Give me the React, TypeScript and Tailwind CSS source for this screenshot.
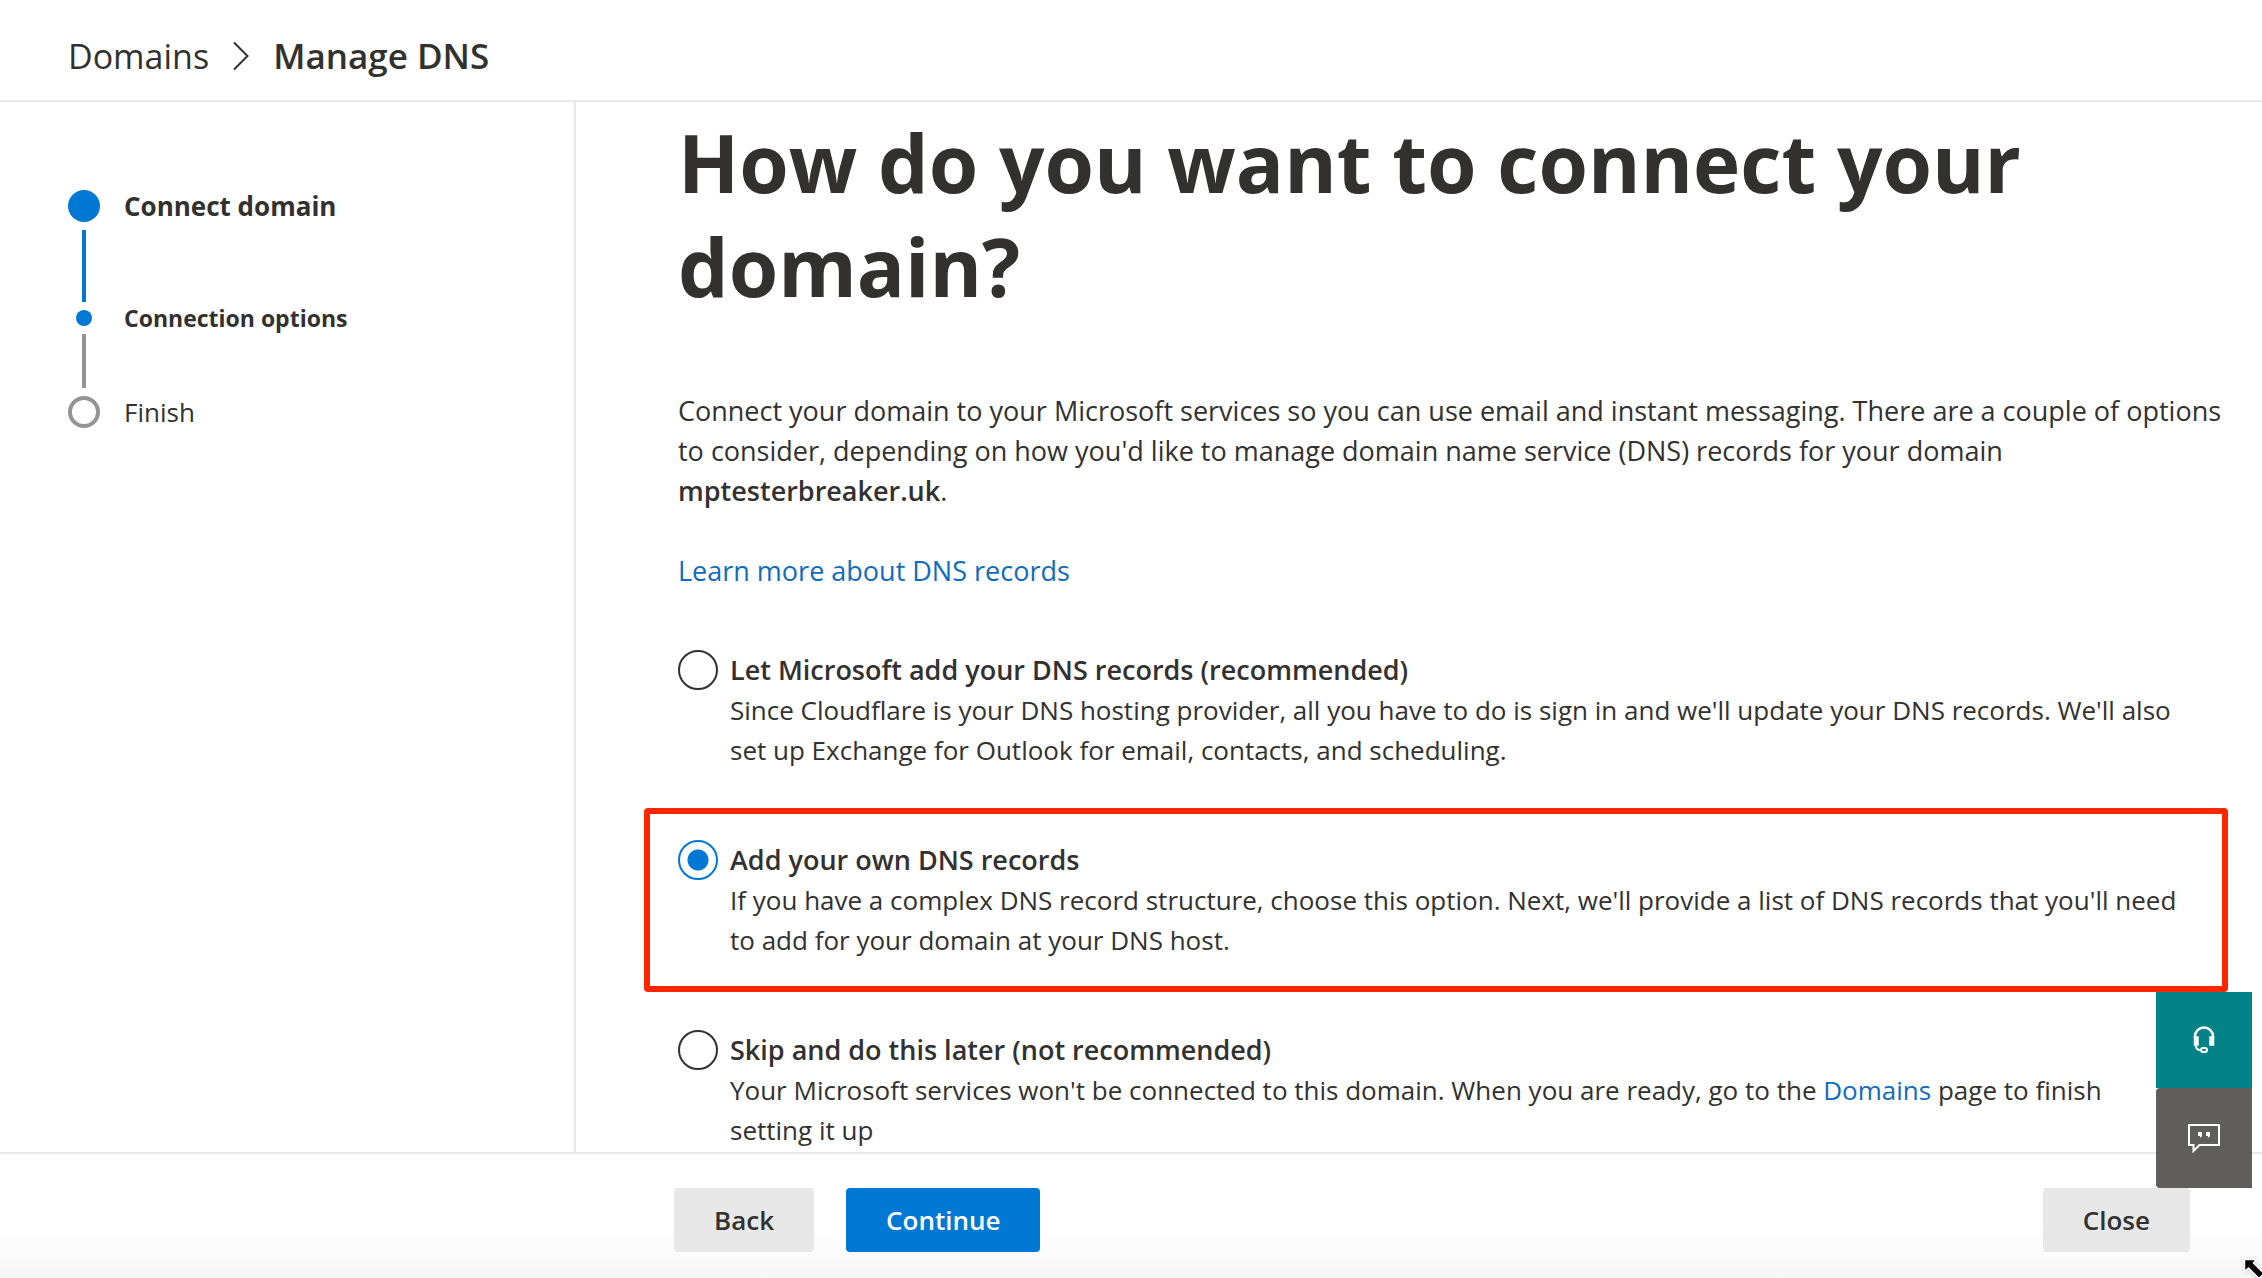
import { useState, type ReactNode } from "react";

type Option = { id: string; title: string; body: ReactNode; highlighted?: boolean };

const options: Option[] = [
  {
    id: "microsoft",
    title: "Let Microsoft add your DNS records (recommended)",
    body: "Since Cloudflare is your DNS hosting provider, all you have to do is sign in and we'll update your DNS records. We'll also set up Exchange for Outlook for email, contacts, and scheduling.",
  },
  {
    id: "own",
    title: "Add your own DNS records",
    body: "If you have a complex DNS record structure, choose this option. Next, we'll provide a list of DNS records that you'll need to add for your domain at your DNS host.",
    highlighted: true,
  },
  {
    id: "skip",
    title: "Skip and do this later (not recommended)",
    body: (
      <>
        Your Microsoft services won't be connected to this domain. When you are ready, go to the{" "}
        <a href="#domains" className="text-[#0f6cbd]">
          Domains
        </a>{" "}
        page to finish setting it up
      </>
    ),
  },
];

function Steps() {
  return (
    <ol className="flex flex-col gap-2">
      <li className="flex h-8 items-center gap-6">
        <span className="size-8 rounded-full bg-[#0078d4]" />
        <span className="text-[26px] font-bold">Connect domain</span>
      </li>
      <li aria-hidden className="ml-[14px] h-[72px] w-1 bg-[#0078d4]" />
      <li className="flex h-4 items-center gap-6">
        <span className="flex w-8 justify-center">
          <span className="size-4 rounded-full bg-[#0078d4]" />
        </span>
        <span className="text-[23px] font-bold">Connection options</span>
      </li>
      <li aria-hidden className="ml-[14px] h-[54px] w-1 bg-[#949494]" />
      <li className="flex h-8 items-center gap-6">
        <span className="size-8 rounded-full border-4 border-[#949494]" />
        <span className="text-[26px]">Finish</span>
      </li>
    </ol>
  );
}

function HelpButtons() {
  return (
    <div className="absolute right-[10px] bottom-[90px] flex w-24 flex-col">
      <button aria-label="Help" className="flex h-24 items-center justify-center bg-[#038387]">
        <svg viewBox="0 0 24 30" className="h-[30px] w-6" fill="none" stroke="#fff" strokeWidth="2.500">
          <path d="M3 13v-1.500a9 9 0 0 1 18 0V13" />
          <path d="M3 12.500h2.500v7H3zM18.500 12.500H21v7h-2.500z" />
          <path d="M4 19.500v1.500c0 2.500 1.500 4 4.500 4" strokeWidth="2" />
          <rect x="9" y="23" width="6" height="4" rx="2" strokeWidth="2" />
        </svg>
      </button>
      <button aria-label="Feedback" className="flex h-[100px] items-center justify-center rounded-l-sm bg-[#605e5c]">
        <svg viewBox="0 0 32 30" className="h-[30px] w-8" fill="none" stroke="#fff" strokeWidth="2">
          <path d="M1 2h30v20H11.500L5.500 28V22H1z" />
          <path d="M10 9h4v4l-2 2v-2h-2zM18 9h4v4l-2 2v-2h-2z" fill="#fff" stroke="none" />
        </svg>
      </button>
    </div>
  );
}

export default function App() {
  const [selected, setSelected] = useState("own");

  return (
    <div className="relative flex h-screen flex-col overflow-hidden bg-white font-['Open_Sans',sans-serif] text-[27px] leading-10 text-[#323130]">
      <header className="border-b-2 border-[#e8e8e8]">
        <nav className="flex h-[100px] items-center gap-6 px-[68px] pt-3 text-[34px]">
          <a href="#domains">Domains</a>
          <svg viewBox="0 0 16 30" className="h-[30px] w-4" fill="none" stroke="#323130" strokeWidth="2">
            <path d="M1 1.500 14.500 15 1 28.500" />
          </svg>
          <span className="text-[35px] font-semibold">Manage DNS</span>
        </nav>
      </header>

      <div className="flex min-h-0 flex-1">
        <aside className="w-[576px] shrink-0 border-r-2 border-[#e8e8e8] px-[68px] pt-[88px]">
          <Steps />
        </aside>

        <main className="min-w-0 flex-1 overflow-hidden pt-2 pr-[34px] pl-[102px]">
          <h1 className="text-[80px] leading-[104px] font-bold">How do you want to connect your domain?</h1>
          <p className="mt-[73px]">
            Connect your domain to your Microsoft services so you can use email and instant messaging. There are a couple of
            options to consider, depending on how you'd like to manage domain name service (DNS) records for your domain{" "}
            <strong className="font-semibold">mptesterbreaker.uk</strong>.
          </p>
          <a href="#learn" className="mt-10 inline-block text-[#0f6cbd]">
            Learn more about DNS records
          </a>

          <div role="radiogroup" aria-label="Connection options" className="mt-[59px] flex flex-col gap-[70px]">
            {options.map((o) => (
              <div key={o.id} className="relative flex gap-3 pr-12">
                {o.highlighted && (
                  <div className="pointer-events-none absolute -top-8 right-0 -bottom-8 -left-[34px] rounded-sm border-[6px] border-[#ff2600]" />
                )}
                <input
                  type="radio"
                  id={o.id}
                  name="connection"
                  checked={selected === o.id}
                  onChange={() => setSelected(o.id)}
                  className="size-10 shrink-0 appearance-none rounded-full border-2 border-[#323130] checked:border-[#0078d4] checked:bg-[radial-gradient(circle,#0078d4_10px,transparent_11px)]"
                />
                <div>
                  <label htmlFor={o.id} className="block font-semibold">
                    {o.title}
                  </label>
                  <p className="text-[26px]">{o.body}</p>
                </div>
              </div>
            ))}
          </div>
        </main>
      </div>

      <footer className="flex h-[126px] shrink-0 items-start border-t-2 border-[#e8e8e8] bg-linear-to-b from-white from-60% to-[#f7f7f7] pt-[34px] pr-[72px] pl-[674px] text-[26px] font-semibold">
        <button className="h-16 rounded-sm bg-[#e8e8e8] px-10">Back</button>
        <button className="ml-8 h-16 rounded-sm bg-[#0078d4] px-10 text-white">Continue</button>
        <button className="ml-auto h-16 rounded-sm bg-[#e8e8e8] px-10">Close</button>
      </footer>

      <HelpButtons />

      <svg viewBox="0 0 20 20" className="pointer-events-none absolute right-0 bottom-0 size-5 drop-shadow-sm">
        <path d="M2.500 1.500H14.500L11.500 5 22 15.500 17 20.500 6.500 10 2.500 13.500z" fill="#000" stroke="#fff" strokeWidth="1.500" />
      </svg>
    </div>
  );
}
